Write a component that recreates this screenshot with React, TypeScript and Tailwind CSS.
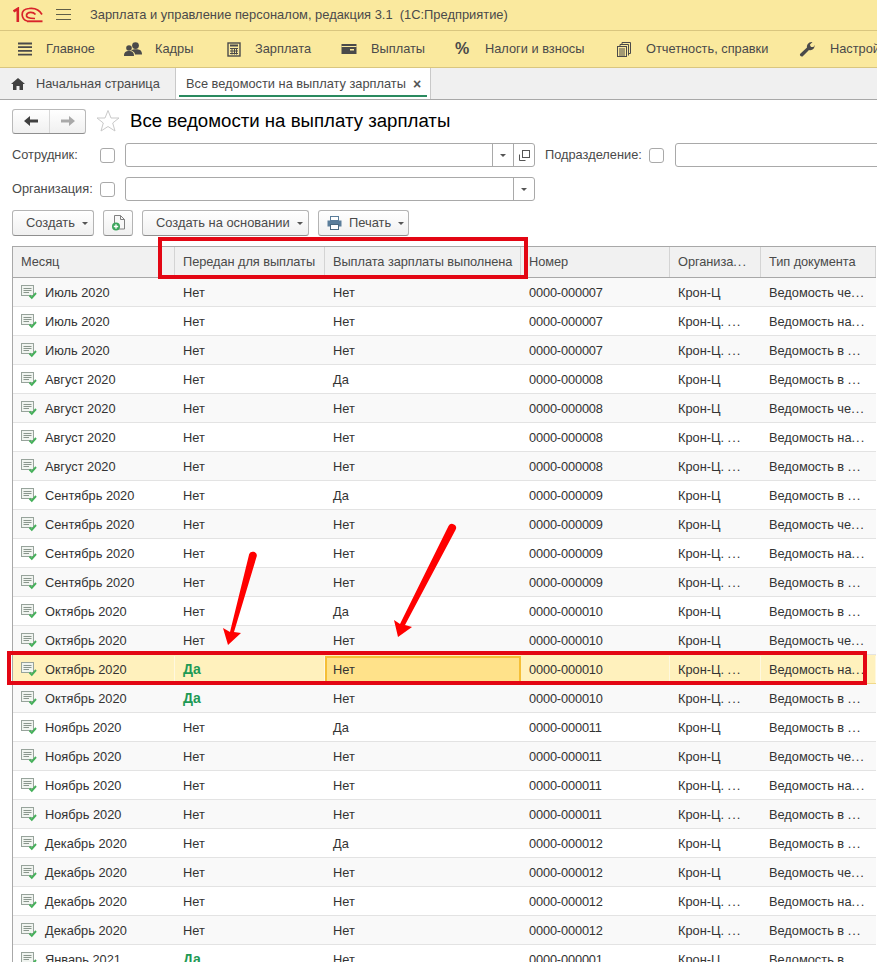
import React from "react";

const org = (i: number) => ([1, 2].includes(i % 4) ? "Крон-Ц. ..." : "Крон-Ц");
const types = ["Ведомость че...", "Ведомость на...", "Ведомость в ...", "Ведомость в ..."];
const rowsBase: [string, string, string, string][] = [
  ["Июль 2020", "Нет", "Нет", "0000-000007"],
  ["Июль 2020", "Нет", "Нет", "0000-000007"],
  ["Июль 2020", "Нет", "Нет", "0000-000007"],
  ["Август 2020", "Нет", "Да", "0000-000008"],
  ["Август 2020", "Нет", "Нет", "0000-000008"],
  ["Август 2020", "Нет", "Нет", "0000-000008"],
  ["Август 2020", "Нет", "Нет", "0000-000008"],
  ["Сентябрь 2020", "Нет", "Да", "0000-000009"],
  ["Сентябрь 2020", "Нет", "Нет", "0000-000009"],
  ["Сентябрь 2020", "Нет", "Нет", "0000-000009"],
  ["Сентябрь 2020", "Нет", "Нет", "0000-000009"],
  ["Октябрь 2020", "Нет", "Да", "0000-000010"],
  ["Октябрь 2020", "Нет", "Нет", "0000-000010"],
  ["Октябрь 2020", "Да", "Нет", "0000-000010"],
  ["Октябрь 2020", "Да", "Нет", "0000-000010"],
  ["Ноябрь 2020", "Нет", "Да", "0000-000011"],
  ["Ноябрь 2020", "Нет", "Нет", "0000-000011"],
  ["Ноябрь 2020", "Нет", "Нет", "0000-000011"],
  ["Ноябрь 2020", "Нет", "Нет", "0000-000011"],
  ["Декабрь 2020", "Нет", "Да", "0000-000012"],
  ["Декабрь 2020", "Нет", "Нет", "0000-000012"],
  ["Декабрь 2020", "Нет", "Нет", "0000-000012"],
  ["Декабрь 2020", "Нет", "Нет", "0000-000012"],
  ["Январь 2021", "Да", "Нет", "0000-000001"],
];

function Dotted({ t }: { t: string }) {
  if (!t.endsWith("...")) return <span>{t}</span>;
  return (
    <span className="whitespace-pre">
      {t.slice(0, -3)}
      <span className="tracking-[1px]">...</span>
    </span>
  );
}

function DocIcon() {
  return (
    <svg width="18" height="15" viewBox="0 0 18 15" className="shrink-0">
      <rect x="0.5" y="0.5" width="12" height="10" fill="#f0f4f0" stroke="#97a39b" />
      <path d="M2.5 3.5H10.5M2.5 5.5H10.5M2.5 7.5H8" stroke="#8a968d" strokeWidth="1" />
      <path d="M8.5 10.5L10.8 12.8L15 8" fill="none" stroke="#45b05a" strokeWidth="1.9" />
    </svg>
  );
}

function Caret() {
  return <span className="h-0 w-0 border-x-[3px] border-t-[3px] border-x-transparent border-t-[#555]" />;
}

function Checkbox() {
  return <span className="h-[15px] w-[15px] shrink-0 rounded-[3px] border border-[#a9a9a9] bg-white" />;
}

function MenuItem({ icon, label, w, gap }: { icon: React.ReactNode; label: string; w: number; gap: number }) {
  return (
    <div className="flex shrink-0 items-center" style={{ width: w, gap }}>
      <span className="flex w-[18px] shrink-0 justify-center text-[#4a4a4a]">{icon}</span>
      <span className="whitespace-nowrap">{label}</span>
    </div>
  );
}

function Btn({ children, cls }: { children: React.ReactNode; cls: string }) {
  return (
    <div className={"flex h-[26px] items-center rounded-[3px] border border-[#b4b4b4] border-b-[#8f8f8f] bg-gradient-to-b from-white to-[#f0f0f0] text-[12.9px] " + cls}>
      {children}
    </div>
  );
}

export default function App() {
  return (
    <div className="relative h-[962px] w-[877px] overflow-hidden bg-white font-['Liberation_Sans',Arial,sans-serif] text-[12.8px] text-[#4a4a4a]">
      {/* title bar */}
      <div className="flex h-[31px] items-center border-b border-[#d9c67f] bg-[#fae99e]">
        <svg width="30" height="16" viewBox="0 0 30 16" className="ml-[13px]">
          <path d="M0.5 4.5L4.8 1.8V15" fill="none" stroke="#d8232a" strokeWidth="2.6" />
          <path d="M29 7.5C26 2 20 1 16 1.5C11 2 9 5 9.2 8C9.4 11 11 13 14 14" fill="none" stroke="#d8232a" strokeWidth="1.7" />
          <path d="M22.5 7.5C20 4.5 14.5 4.8 13.5 8C13 10 15 11.5 22 11.5" fill="none" stroke="#d8232a" strokeWidth="1.7" />
          <path d="M14 14.3H29.5" stroke="#d8232a" strokeWidth="1.9" />
        </svg>
        <svg width="15" height="12" viewBox="0 0 15 12" className="ml-[13px]">
          <path d="M0 .5H15M0 5.5H15M0 10.5H15" stroke="#5f5e48" strokeWidth="1" />
        </svg>
        <span className="ml-[19px] whitespace-pre text-[12.9px]">Зарплата и управление персоналом, редакция 3.1  (1С:Предприятие)</span>
      </div>
      {/* section menu */}
      <div className="flex h-[37px] items-center overflow-hidden border-b border-[#d9c67f] bg-[#fae99e] pl-[16px]">
        <MenuItem w={108} gap={12} label="Главное" icon={
          <svg width="16" height="14" viewBox="0 0 16 14"><path d="M1 1.5H15M1 5.2H15M1 8.9H15M1 12.6H15" stroke="#4a4a4a" strokeWidth="1.8" /></svg>
        } />
        <MenuItem w={101} gap={13} label="Кадры" icon={
          <svg width="18" height="15" viewBox="0 0 18 15" fill="#4a4a4a"><circle cx="11.5" cy="3.6" r="3.4" /><circle cx="5" cy="6" r="2.8" /><path d="M0 14C0 10 2 9 5 9S10 10 10 14ZM7 8.5C9 7 14 7 16 8C17.5 9 18 10.5 18 12.5H11C11 10.5 9 9 7 8.5Z" /></svg>
        } />
        <MenuItem w={115} gap={12} label="Зарплата" icon={
          <svg width="14" height="15" viewBox="0 0 14 15"><rect x="1" y="1" width="12" height="13" fill="none" stroke="#4a4a4a" strokeWidth="1.4" /><path d="M3 3.5H11" stroke="#4a4a4a" strokeWidth="2" /><path d="M3 6.5H11M3 9H11M3 11.5H11M5 6V12.5M7.5 6V12.5M9.5 6V12.5" stroke="#4a4a4a" strokeWidth="1" /></svg>
        } />
        <MenuItem w={113} gap={13} label="Выплаты" icon={
          <svg width="16" height="12" viewBox="0 0 16 12"><rect x="0.5" y="1" width="15" height="10" fill="#4a4a4a" /><path d="M0.5 3.5H15.5" stroke="#fae99e" strokeWidth="1" /><rect x="9" y="6" width="4" height="1.5" fill="#fae99e" /></svg>
        } />
        <MenuItem w={162} gap={14} label="Налоги и взносы" icon={<span className="text-[16px] font-bold leading-none">%</span>} />
        <MenuItem w={183} gap={13} label="Отчетность, справки" icon={
          <svg width="14" height="15" viewBox="0 0 14 15" fill="none" stroke="#4a4a4a" strokeWidth="1"><path d="M5 2.5V.5H13.5V11.5H11.5" /><path d="M3 4.5V2.5H11.5V13.5" /><rect x="0.5" y="4.5" width="9" height="10" /><path d="M2 7H8M2 9H8M2 11H8M2 13H8" /></svg>
        } />
        <MenuItem w={100} gap={14} label="Настройка" icon={
          <svg width="16" height="16" viewBox="0 0 16 16" fill="#4a4a4a"><path d="M1 13L8 6.5C7.5 4 9.5.5 13.5 1L10.8 3.8L12 6L14.5 6L15.5 4C16 7.5 13 10 10 9L3.5 15.5C2 16 .5 14.5 1 13Z" /></svg>
        } />
      </div>
      {/* tabs */}
      <div className="flex h-[32px] items-stretch border-b border-[#a8a8a8] bg-[#f0f0f0]">
        <div className="flex w-[176px] items-center border-r border-[#c9c9c9] pl-[11px]">
          <svg width="14" height="12" viewBox="0 0 14 12" fill="#404040"><path d="M7 0L0 6H2V12H5.5V8H8.5V12H12V6H14Z" /></svg>
          <span className="ml-[11px]">Начальная страница</span>
        </div>
        <div className="relative flex w-[255px] items-center border-r border-[#c9c9c9] bg-white pl-[10px]">
          <span className="whitespace-nowrap">Все ведомости на выплату зарплаты</span>
          <span className="ml-[7px] text-[14px] font-bold leading-none text-[#555]">×</span>
          <span className="absolute bottom-[2px] left-[3px] h-[2px] w-[248px] bg-[#2a8a5f]" />
        </div>
      </div>
      {/* heading */}
      <div className="flex h-[42px] items-center pl-[12px]">
        <div className="flex h-[25px] w-[74px] items-stretch rounded-[3px] border border-[#b9b9b9] border-b-[#8f8f8f] bg-gradient-to-b from-white to-[#f0f0f0]">
          <span className="flex w-[37px] items-center justify-center border-r border-[#d8d8d8] text-[#404040]">
            <svg width="14" height="10" viewBox="0 0 14 10" fill="currentColor"><path d="M0 5L6 0V3.5H14V6.5H6V10Z" /></svg>
          </span>
          <span className="flex flex-1 items-center justify-center text-[#a9a9a9]">
            <svg width="14" height="10" viewBox="0 0 14 10" fill="currentColor"><path d="M14 5L8 0V3.5H0V6.5H8V10Z" /></svg>
          </span>
        </div>
        <svg width="24" height="24" viewBox="0 0 24 24" className="ml-[10px]" fill="none" stroke="#c9c9c9"><path d="M12 1.5L15 9H23L16.7 14L19 22L12 17.5L5 22L7.3 14L1 9H9Z" /></svg>
        <span className="ml-[10px] whitespace-nowrap text-[18.65px] leading-none text-black">Все ведомости на выплату зарплаты</span>
      </div>
      {/* filters */}
      <div className="mt-[1px] flex h-[24px] items-center pl-[12px]">
        <span className="w-[88px] shrink-0">Сотрудник:</span>
        <Checkbox />
        <div className="ml-[10px] flex h-[24px] w-[410px] shrink-0 justify-end rounded-[3px] border border-[#a9a9a9]">
          <span className="flex w-[21px] items-center justify-center border-l border-[#a9a9a9]"><Caret /></span>
          <span className="flex w-[21px] items-center justify-center border-l border-[#a9a9a9]">
            <svg width="11" height="11" viewBox="0 0 11 11" fill="none" stroke="#555"><rect x="3.5" y="0.5" width="7" height="7" fill="white" /><path d="M0.5 4.5V10.5H6.5" /></svg>
          </span>
        </div>
        <span className="ml-[10px] w-[104px] shrink-0 whitespace-nowrap">Подразделение:</span>
        <Checkbox />
        <div className="ml-[11px] h-[24px] w-[300px] shrink-0 rounded-[3px] border border-[#a9a9a9]" />
      </div>
      <div className="mt-[10px] flex h-[24px] items-center pl-[12px]">
        <span className="w-[88px] shrink-0">Организация:</span>
        <Checkbox />
        <div className="ml-[10px] flex h-[24px] w-[410px] shrink-0 justify-end rounded-[3px] border border-[#a9a9a9]">
          <span className="flex w-[21px] items-center justify-center border-l border-[#a9a9a9]"><Caret /></span>
        </div>
      </div>
      {/* command bar */}
      <div className="mt-[9px] flex items-center pl-[12px]">
        <Btn cls="w-[82px] gap-[7px] pl-[13px]"><span>Создать</span><Caret /></Btn>
        <Btn cls="ml-[9px] w-[30px] justify-center">
          <svg width="15" height="16" viewBox="0 0 15 16"><path d="M3.5 .5H9.5L13.5 4.5V14H3.5Z" fill="#f7f7f7" stroke="#808080" /><path d="M9.5 .5V4.5H13.5" fill="none" stroke="#808080" /><circle cx="5" cy="11.5" r="4" fill="#3ba55c" /><path d="M5 9.3V13.7M2.8 11.5H7.2" stroke="white" strokeWidth="1.3" /></svg>
        </Btn>
        <Btn cls="ml-[9px] w-[167px] gap-[7px] pl-[13px]"><span className="whitespace-nowrap">Создать на основании</span><Caret /></Btn>
        <Btn cls="ml-[9px] w-[91px] gap-[7px] pl-[8px]">
          <svg width="15" height="14" viewBox="0 0 15 14"><rect x="3.5" y="0.5" width="8" height="4" fill="white" stroke="#5a7d9a" /><rect x="0.5" y="4.5" width="14" height="6" fill="#5a7d9a" /><rect x="3.5" y="8.5" width="8" height="5" fill="white" stroke="#4a6880" /></svg>
          <span>Печать</span><Caret />
        </Btn>
      </div>
      {/* table */}
      <div className="ml-[12px] mt-[10px] w-[864px] border-l border-t border-[#a8a8a8]">
        <div className="flex h-[31px] items-center border-b border-[#a8a8a8] bg-[#f1f1f1] tracking-[-0.06px]">
          {[["Месяц", 162], ["Передан для выплаты", 150], ["Выплата зарплаты выполнена", 196], ["Номер", 149], ["Организа...", 91], ["Тип документа", 115]].map(([t, w], i) => (
            <div key={i} className="flex h-full shrink-0 items-center border-r border-[#d4d4d4] pl-[8px]" style={{ width: w as number }}>
              <span className="whitespace-nowrap"><Dotted t={t as string} /></span>
            </div>
          ))}
        </div>
        {rowsBase.map((r, i) => {
          const sel = i === 13;
          const sep = sel ? "flex h-full items-center border-r border-[#fff8df]" : "";
          return (
            <div key={i} className={"flex h-[29px] items-center border-b pt-[1px] text-[#333] " + (sel ? "border-[#f1d98a] bg-[#fff1bd]" : i % 2 === 0 ? "border-[#e3e3e3] bg-[#f9f9f9]" : "border-[#e3e3e3] bg-white")}>
              <div className={"flex w-[162px] shrink-0 items-center gap-[7px] pl-[8px] " + sep}>
                <DocIcon />
                <span className="-ml-[1px] whitespace-nowrap">{r[0]}</span>
              </div>
              <div className={"w-[150px] shrink-0 pl-[8px] " + sep}>
                {r[1] === "Да" ? <span className="text-[14px] font-bold text-[#1f9a55]">Да</span> : <span>{r[1]}</span>}
              </div>
              <div className={"shrink-0 " + (sel ? "flex h-[27px] w-[196px] items-center border-2 border-[#f5bf37] bg-[#ffe28a] pl-[6px]" : "w-[196px] pl-[8px]")}>{r[2]}</div>
              <div className={"w-[149px] shrink-0 pl-[8px] tracking-[-0.15px] " + sep}>{r[3]}</div>
              <div className={"w-[91px] shrink-0 whitespace-nowrap pl-[8px] " + sep}><Dotted t={org(i)} /></div>
              <div className={"w-[115px] shrink-0 whitespace-nowrap pl-[8px] " + sep}><Dotted t={types[i % 4]} /></div>
            </div>
          );
        })}
      </div>
      {/* annotations */}
      <div className="absolute left-[158px] top-[237px] h-[42px] w-[370px] border-[4px] border-[#e30613]" />
      <div className="absolute left-[7px] top-[651px] h-[34px] w-[860px] border-[4px] border-[#e30613]" />
      <svg width="877" height="962" viewBox="0 0 877 962" className="absolute left-0 top-0">
        <path d="M249.2 554A4 4 0 0 1 256.8 556L234 632L241 633L228 645L223 628L230 632Z" fill="#f00" />
        <path d="M448.5 526A4 4 0 0 1 455.5 530L405 625L412 627L398 637L394 620L400 624Z" fill="#f00" />
      </svg>
    </div>
  );
}
